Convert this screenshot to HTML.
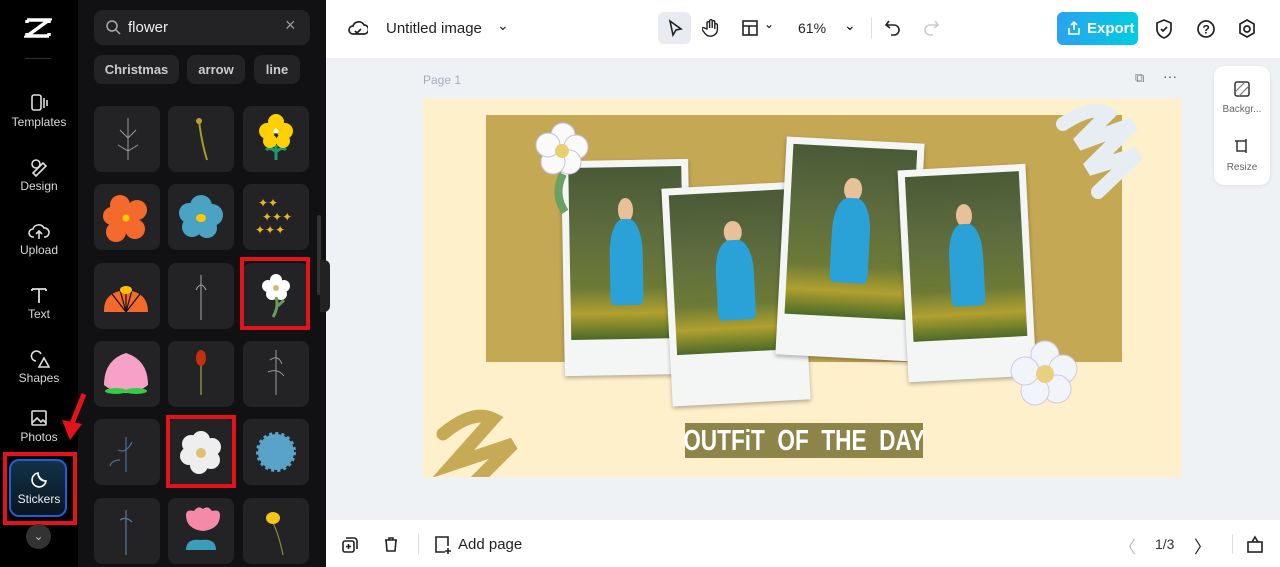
<!DOCTYPE html>
<html><head><style>
*{margin:0;padding:0;box-sizing:border-box}
body{width:1280px;height:567px;overflow:hidden;font-family:"Liberation Sans",sans-serif;background:#eff2f5;position:relative}
.abs{position:absolute}
#side{left:0;top:0;width:78px;height:567px;background:#000}
.nav{position:absolute;left:0;width:78px;text-align:center;color:#d8d8d8;font-size:12px}
.nav svg{display:block;margin:0 auto 2px}
#panel{left:78px;top:0;width:248px;height:567px;background:#111113}
.tile{position:absolute;width:66px;height:66px;background:#232326;border-radius:8px}
.chip{position:absolute;top:55px;height:29px;background:#232326;border-radius:8px;color:#ccc;font-size:13px;font-weight:bold;line-height:29px;text-align:center}
.red{position:absolute;border:4px solid #e3131b}
#top{left:326px;top:0;width:954px;height:58px;background:#fff}
#bot{left:326px;top:520px;width:954px;height:47px;background:#fff}
.pol{position:absolute;background:#f4f6f6;box-shadow:0 2px 4px rgba(0,0,0,.3)}
.ph{position:absolute;left:7px;top:7px;right:7px;background:linear-gradient(180deg,#4a5a36 0%,#5f6d3f 40%,#6c7a36 70%,#b0a030 85%,#4b6a28 100%)}
.fig{position:absolute;left:35%;width:30%;top:30%;height:50%;background:#2aa2d8;border-radius:40% 40% 10% 10%}
.head{position:absolute;left:43%;width:14%;top:18%;height:14%;background:#e8c09a;border-radius:50%}
</style></head><body>
<div id="side" class="abs">
 <svg class="abs" style="left:24px;top:17px" width="28" height="22" viewBox="0 0 28 22"><path d="M3 3h22L3 19h22M3 3v3M25 19v-3M3 19v-3M25 3v3" stroke="#fff" stroke-width="3.5" fill="none"/></svg>
 <div class="abs" style="left:25px;top:58px;width:26px;height:1px;background:#333"></div>
 <div class="nav" style="top:93px"><svg width="20" height="20"><rect x="3" y="2" width="9" height="15" rx="2" stroke="#ddd" stroke-width="1.6" fill="none"/><path d="M15 5v10M18 7v6" stroke="#ddd" stroke-width="1.6"/></svg>Templates</div>
 <div class="nav" style="top:157px"><svg width="20" height="20"><circle cx="7" cy="7" r="4" stroke="#ddd" stroke-width="1.6" fill="none"/><path d="M4 16l10-10 3 3-10 10z" stroke="#ddd" stroke-width="1.6" fill="none"/></svg>Design</div>
 <div class="nav" style="top:221px"><svg width="22" height="20"><path d="M6 16H5a4 4 0 010-8 6 6 0 0111-1 4 4 0 011 9h-1M11 18V10M8 13l3-3 3 3" stroke="#ddd" stroke-width="1.6" fill="none"/></svg>Upload</div>
 <div class="nav" style="top:285px"><svg width="20" height="20"><path d="M3 4h14M10 4v14M3 4v2M17 4v2" stroke="#ddd" stroke-width="1.8" fill="none"/></svg>Text</div>
 <div class="nav" style="top:349px"><svg width="22" height="20"><path d="M8 12a5 5 0 115-7M11 18l5-9 5 9z" stroke="#ddd" stroke-width="1.6" fill="none"/></svg>Shapes</div>
 <div class="nav" style="top:408px"><svg width="20" height="20"><rect x="3" y="3" width="14" height="14" rx="1" stroke="#ddd" stroke-width="1.6" fill="none"/><path d="M3 15l5-5 4 4 2-2 3 3" stroke="#ddd" stroke-width="1.6" fill="none"/></svg>Photos</div>
 <div class="abs" style="left:9px;top:459px;width:58px;height:58px;border-radius:10px;border:2px solid #1f5fd8;background:linear-gradient(#123248,#0a1520)"></div>
 <div class="nav" style="top:470px;color:#eee"><svg width="20" height="20"><path d="M17 11a7 7 0 11-8-8c0 5 3 8 8 8zM9 3c0 4 4 8 8 8" stroke="#fff" stroke-width="1.6" fill="none"/></svg>Stickers</div>
 <div class="red" style="left:3px;top:452px;width:74px;height:73px"></div>
 <div class="abs" style="left:26px;top:524px;width:25px;height:25px;border-radius:50%;background:#333;color:#bbb;font-size:12px;text-align:center;line-height:25px">⌄</div>
</div>
<div id="panel" class="abs">
 <div class="abs" style="left:16px;top:10px;width:216px;height:35px;background:#232326;border-radius:9px"></div>
 <svg class="abs" style="left:27px;top:19px" width="16" height="16"><circle cx="7" cy="7" r="5" stroke="#aaa" stroke-width="1.5" fill="none"/><path d="M11 11l4 4" stroke="#aaa" stroke-width="1.5"/></svg>
 <div class="abs" style="left:50px;top:19px;color:#eee;font-size:15px">flower</div>
 <div class="abs" style="left:207px;top:15px;color:#999;font-size:18px">×</div>
 <div class="chip" style="left:16px;width:85px">Christmas</div>
 <div class="chip" style="left:109px;width:58px">arrow</div>
 <div class="chip" style="left:176px;width:46px">line</div>
 <div class="abs" style="left:239px;top:215px;width:4px;height:80px;background:#333;border-radius:2px"></div>
 <div class="abs" style="left:242px;top:260px;width:10px;height:52px;background:#222;border-radius:0 6px 6px 0"></div>
</div>
<svg class="abs" style="left:58px;top:392px" width="30" height="52"><path d="M26 2L13 34" stroke="#e3131b" stroke-width="5"/><path d="M4 28l8 20 12-16z" fill="#e3131b"/></svg>
<div class="tile" style="left:94px;top:106px"></div><div class="tile" style="left:168px;top:106px"></div><div class="tile" style="left:243px;top:106px"></div>
<div class="tile" style="left:94px;top:184px"></div><div class="tile" style="left:168px;top:184px"></div><div class="tile" style="left:243px;top:184px"></div>
<div class="tile" style="left:94px;top:263px"></div><div class="tile" style="left:168px;top:263px"></div><div class="tile" style="left:243px;top:263px"></div>
<div class="tile" style="left:94px;top:341px"></div><div class="tile" style="left:168px;top:341px"></div><div class="tile" style="left:243px;top:341px"></div>
<div class="tile" style="left:94px;top:419px"></div><div class="tile" style="left:168px;top:419px"></div><div class="tile" style="left:243px;top:419px"></div>
<div class="tile" style="left:94px;top:498px"></div><div class="tile" style="left:168px;top:498px"></div><div class="tile" style="left:243px;top:498px"></div>
<svg class="abs" style="left:0;top:0" width="326" height="567">
 <g stroke="#999" fill="none" stroke-width="1"><path d="M128 160V118M120 130l8 8 8-8M118 145l10 6 10-6"/></g>
 <path d="M199 120q2 20 8 40" stroke="#a99a20" stroke-width="2" fill="none"/><circle cx="199" cy="121" r="3" fill="#b8a030"/>
 <path d="M276 145v15M276 152q6-6 10-2M276 152q-6-6-10-2" stroke="#1a9a70" stroke-width="3" fill="none"/>
 <g fill="#ffd000"><circle cx="276" cy="122" r="8"/><circle cx="267" cy="131" r="8"/><circle cx="285" cy="131" r="8"/><circle cx="270" cy="141" r="7"/><circle cx="283" cy="141" r="7"/></g><circle cx="276" cy="131" r="2.5" fill="#fff"/>
 <g fill="#f36a2c"><circle cx="120" cy="205" r="10"/><circle cx="137" cy="210" r="10"/><circle cx="135" cy="229" r="10"/><circle cx="116" cy="232" r="10"/><circle cx="112" cy="216" r="9"/><circle cx="126" cy="219" r="10"/></g><circle cx="126" cy="218" r="3.5" fill="#ffc800"/>
 <g fill="#4ba3c3"><circle cx="201" cy="206" r="11"/><circle cx="212" cy="215" r="11"/><circle cx="207" cy="228" r="10"/><circle cx="192" cy="227" r="10"/><circle cx="189" cy="213" r="10"/><circle cx="200" cy="218" r="12"/></g><ellipse cx="201" cy="218" rx="5" ry="4" fill="#ffc800"/>
 <g fill="#e8b820" font-size="12"><text x="258" y="207">✦✦</text><text x="262" y="221">✦✦✦</text><text x="255" y="234">✦✦✦</text></g>
 <path d="M104 312q-1-20 22-22q22 2 22 22z" fill="#f36a2c"/><g stroke="#111" stroke-width="1.2"><path d="M126 312l-14-18M126 312l-6-22M126 312v-22M126 312l6-22M126 312l14-18"/></g><ellipse cx="126" cy="290" rx="6" ry="4" fill="#ffc000"/>
 <path d="M201 320v-45M196 290q5-10 10 0" stroke="#aaa" stroke-width="1" fill="none"/>
 <g fill="#fff"><circle cx="276" cy="280" r="6"/><circle cx="284" cy="286" r="6"/><circle cx="268" cy="286" r="6"/><circle cx="272" cy="294" r="6"/><circle cx="281" cy="294" r="6"/></g><circle cx="276" cy="288" r="3" fill="#d8b870"/><path d="M276 297q3 10-3 20M278 306l6-6" stroke="#6a9a5a" stroke-width="3" fill="none"/>
 <path d="M104 385q0-25 22-32q22 7 22 32q-10 8-22 8q-12 0-22-8z" fill="#f7a0c8"/><ellipse cx="116" cy="391" rx="11" ry="3" fill="#3c4"/><ellipse cx="136" cy="391" rx="11" ry="3" fill="#3c4"/>
 <path d="M201 395v-30" stroke="#8a8a40" stroke-width="1.5"/><ellipse cx="201" cy="358" rx="5" ry="8" fill="#c4300c"/>
 <path d="M276 395v-45M270 360q8-6 12 4M268 372q10-4 16 4" stroke="#999" stroke-width="1" fill="none"/>
 <path d="M126 472v-35M118 450q8 4 14-8M120 460q-8 0-10 6" stroke="#4a7090" stroke-width="1.2" fill="none"/>
 <g fill="#eee"><circle cx="201" cy="440" r="9"/><circle cx="212" cy="447" r="9"/><circle cx="211" cy="460" r="9"/><circle cx="199" cy="465" r="9"/><circle cx="189" cy="456" r="9"/><circle cx="191" cy="444" r="9"/></g><circle cx="201" cy="453" r="5" fill="#e0c070"/>
 <circle cx="276" cy="452" r="18" fill="#5aa3c8" stroke="#5aa3c8" stroke-width="4" stroke-dasharray="3 3"/>
 <path d="M126 555v-45M120 520q6-4 12 2" stroke="#5a7890" stroke-width="1.2" fill="none"/>
 <path d="M186 515q0-6 8-4q4-6 9-2q5-4 9 2q8-2 8 4q0 14-17 16q-17-2-17-16z" fill="#f58aa8"/><path d="M201 532v8M186 550q0-12 15-10q15-2 15 10z" fill="#3c9cbc"/>
 <path d="M283 555q-4-20-10-32" stroke="#8a8a40" stroke-width="1.2" fill="none"/><ellipse cx="273" cy="518" rx="7" ry="6" fill="#f5c518"/>
</svg>
<div class="red" style="left:240px;top:257px;width:70px;height:73px"></div>
<div class="red" style="left:166px;top:415px;width:70px;height:73px"></div>

<div id="top" class="abs">
 <svg class="abs" style="left:22px;top:19px" width="20" height="20"><path d="M6 15H5a4 4 0 010-8 6 6 0 0111-1 4 4 0 010 9H6M7 12l2 2 4-4" stroke="#222" stroke-width="1.7" fill="none"/></svg>
 <div class="abs" style="left:60px;top:20px;font-size:15px;color:#222">Untitled image</div>
 <div class="abs" style="left:171px;top:17px;font-size:14px;color:#222">⌄</div>
 <div class="abs" style="left:332px;top:12px;width:33px;height:32px;background:#e8ebef;border-radius:6px"></div>
 <svg class="abs" style="left:340px;top:19px" width="18" height="18"><path d="M4 2l11 8-5 1-3 5z" stroke="#222" stroke-width="1.6" fill="none"/></svg>
 <svg class="abs" style="left:376px;top:18px" width="18" height="20"><path d="M5 11V5a1.3 1.3 0 012.6 0v5V3a1.3 1.3 0 012.6 0v7V4a1.3 1.3 0 012.6 0v7V7a1.3 1.3 0 012.6 0v5a7 7 0 01-12 4l-3-4a1.3 1.3 0 012-2z" stroke="#222" stroke-width="1.4" fill="none"/></svg>
 <svg class="abs" style="left:415px;top:19px" width="18" height="18"><rect x="2" y="2" width="14" height="14" stroke="#222" stroke-width="1.6" fill="none"/><path d="M2 7h14M8 7v9" stroke="#222" stroke-width="1.6"/></svg>
 <div class="abs" style="left:438px;top:17px;font-size:12px">⌄</div>
 <div class="abs" style="left:472px;top:20px;font-size:14px;color:#222">61%</div>
 <div class="abs" style="left:518px;top:17px;font-size:14px">⌄</div>
 <div class="abs" style="left:545px;top:18px;width:1px;height:20px;background:#ddd"></div>
 <svg class="abs" style="left:558px;top:19px" width="18" height="18"><path d="M5 2L2 6l4 3M2 6h8a5 5 0 010 10H7" stroke="#222" stroke-width="1.6" fill="none"/></svg>
 <svg class="abs" style="left:596px;top:19px" width="18" height="18"><path d="M13 2l3 4-4 3M16 6H8a5 5 0 000 10h3" stroke="#ccc" stroke-width="1.6" fill="none"/></svg>
 <div class="abs" style="left:731px;top:12px;width:81px;height:33px;border-radius:6px;background:linear-gradient(90deg,#2aa2f0,#00cde0);color:#fff;font-size:15px;font-weight:bold;line-height:33px;padding-left:30px">Export</div>
 <svg class="abs" style="left:741px;top:20px" width="14" height="16"><path d="M7 10V2M4 5l3-3 3 3M2 8v6h10V8" stroke="#fff" stroke-width="1.6" fill="none"/></svg>
 <svg class="abs" style="left:828px;top:18px" width="20" height="22"><path d="M10 2l7 3v6c0 5-4 8-7 9-3-1-7-4-7-9V5z M7 11l2 2 4-4" stroke="#222" stroke-width="1.7" fill="none"/></svg>
 <svg class="abs" style="left:870px;top:19px" width="20" height="20"><circle cx="10" cy="10" r="8" stroke="#222" stroke-width="1.7" fill="none"/><text x="6.5" y="14.5" font-size="12" font-weight="bold" fill="#222">?</text></svg>
 <svg class="abs" style="left:911px;top:18px" width="20" height="22"><path d="M10 2l7 4v9l-7 4-7-4V6z" stroke="#222" stroke-width="1.7" fill="none"/><circle cx="10" cy="11" r="3" stroke="#222" stroke-width="1.7" fill="none"/></svg>
</div>

<div class="abs" style="left:423px;top:73px;font-size:12px;color:#aab">Page 1</div>
<div class="abs" style="left:1135px;top:70px;font-size:13px;color:#777">⧉</div>
<div class="abs" style="left:1163px;top:68px;font-size:14px;color:#555">···</div>
<div class="abs" style="left:1214px;top:66px;width:56px;height:119px;background:#fff;border-radius:10px;box-shadow:0 1px 4px rgba(0,0,0,.08)"></div>
<svg class="abs" style="left:1233px;top:80px" width="18" height="18"><rect x="2" y="2" width="14" height="14" rx="2" stroke="#333" stroke-width="1.5" fill="none"/><path d="M2 12l10-10M6 16l10-10" stroke="#777" stroke-width="1.2"/></svg>
<div class="abs" style="left:1214px;top:104px;width:56px;text-align:center;font-size:10px;color:#666">Backgr...</div>
<svg class="abs" style="left:1233px;top:137px" width="18" height="18"><path d="M4 4h9v10H4zM13 2v3M13 13v3M2 4h2" stroke="#333" stroke-width="1.5" fill="none"/></svg>
<div class="abs" style="left:1214px;top:162px;width:56px;text-align:center;font-size:10px;color:#666">Resize</div>

<div class="abs" style="left:423px;top:99px;width:758px;height:378px;background:#fff0cc;overflow:hidden">
 <div class="abs" style="left:63px;top:16px;width:636px;height:247px;background:#c4a854"></div>
 <svg class="abs" style="left:0;top:0" width="758" height="378">
  <path d="M640 25q30-20 45-10l-30 30 55-20-45 45 50-15-40 38" stroke="#e7eef3" stroke-width="14" fill="none" stroke-linecap="round"/>
  <path d="M20 335q30-25 50-15l-40 45 60-20-50 50" stroke="#c6aa55" stroke-width="13" fill="none" stroke-linecap="round"/>
 </svg>
 <div class="pol" style="left:140px;top:61px;width:127px;height:215px;transform:rotate(-1deg)"><div class="ph" style="height:172px"><div class="head"></div><div class="fig"></div></div></div>
 <div class="pol" style="left:244px;top:86px;width:138px;height:218px;transform:rotate(-3deg)"><div class="ph" style="height:160px"><div class="head"></div><div class="fig"></div></div></div>
 <div class="pol" style="left:358px;top:41px;width:138px;height:218px;transform:rotate(3deg)"><div class="ph" style="height:170px"><div class="head"></div><div class="fig"></div></div></div>
 <div class="pol" style="left:480px;top:68px;width:128px;height:212px;transform:rotate(-3deg)"><div class="ph" style="height:165px"><div class="head"></div><div class="fig"></div></div></div>
 <svg class="abs" style="left:0;top:0" width="758" height="378">
  <path d="M140 75q-10 20 2 38" stroke="#6aa060" stroke-width="8" fill="none"/>
  <g fill="#fafafa" stroke="#c8c0e0"><circle cx="140" cy="36" r="12"/><circle cx="153" cy="48" r="12"/><circle cx="146" cy="63" r="12"/><circle cx="130" cy="63" r="12"/><circle cx="125" cy="46" r="12"/></g><circle cx="139" cy="52" r="7" fill="#e8d070"/>
  <g fill="#f1f4f8" stroke="#cfc8e6"><circle cx="622" cy="256" r="14"/><circle cx="640" cy="270" r="14"/><circle cx="634" cy="290" r="14"/><circle cx="612" cy="292" r="14"/><circle cx="602" cy="272" r="14"/></g><circle cx="622" cy="275" r="9" fill="#e9d080"/>
 </svg>
 <div class="abs" style="left:262px;top:324px;width:238px;height:35px;background:#8d8449"></div>
 <div class="abs" style="left:381px;top:324px;height:35px;line-height:37px;color:#fff;font-weight:bold;font-size:29px;white-space:nowrap;word-spacing:8px;transform:translateX(-50%) scaleX(.78)">OUTFiT OF THE DAY</div>
</div>

<div id="bot" class="abs">
 <svg class="abs" style="left:15px;top:16px" width="18" height="18"><rect x="2" y="5" width="11" height="11" rx="2" stroke="#222" stroke-width="1.6" fill="none"/><path d="M5 2h8a3 3 0 013 3v8M7.5 8v5M5 10.5h5" stroke="#222" stroke-width="1.6" fill="none"/></svg>
 <svg class="abs" style="left:56px;top:15px" width="18" height="18"><path d="M3 5h12M7 5V3h4v2M4 5l1 11h8l1-11" stroke="#222" stroke-width="1.6" fill="none"/></svg>
 <div class="abs" style="left:92px;top:14px;width:1px;height:20px;background:#ddd"></div>
 <svg class="abs" style="left:107px;top:15px" width="20" height="20"><path d="M12 17H3V2h12v9M15 13v6M12 16h6" stroke="#222" stroke-width="1.6" fill="none"/></svg>
 <div class="abs" style="left:132px;top:16px;font-size:15px;color:#222">Add page</div>
 <div class="abs" style="left:793px;top:13px;font-size:17px;color:#bbb">〈</div>
 <div class="abs" style="left:829px;top:16px;font-size:14px;color:#333">1/3</div>
 <div class="abs" style="left:868px;top:13px;font-size:17px;color:#222">〉</div>
 <div class="abs" style="left:906px;top:14px;width:1px;height:20px;background:#ddd"></div>
 <svg class="abs" style="left:919px;top:13px" width="20" height="22"><rect x="3" y="9" width="14" height="10" stroke="#222" stroke-width="1.6" fill="none"/><path d="M7 9l3-5 3 5" stroke="#222" stroke-width="1.6" fill="none"/></svg>
</div>
</body></html>
